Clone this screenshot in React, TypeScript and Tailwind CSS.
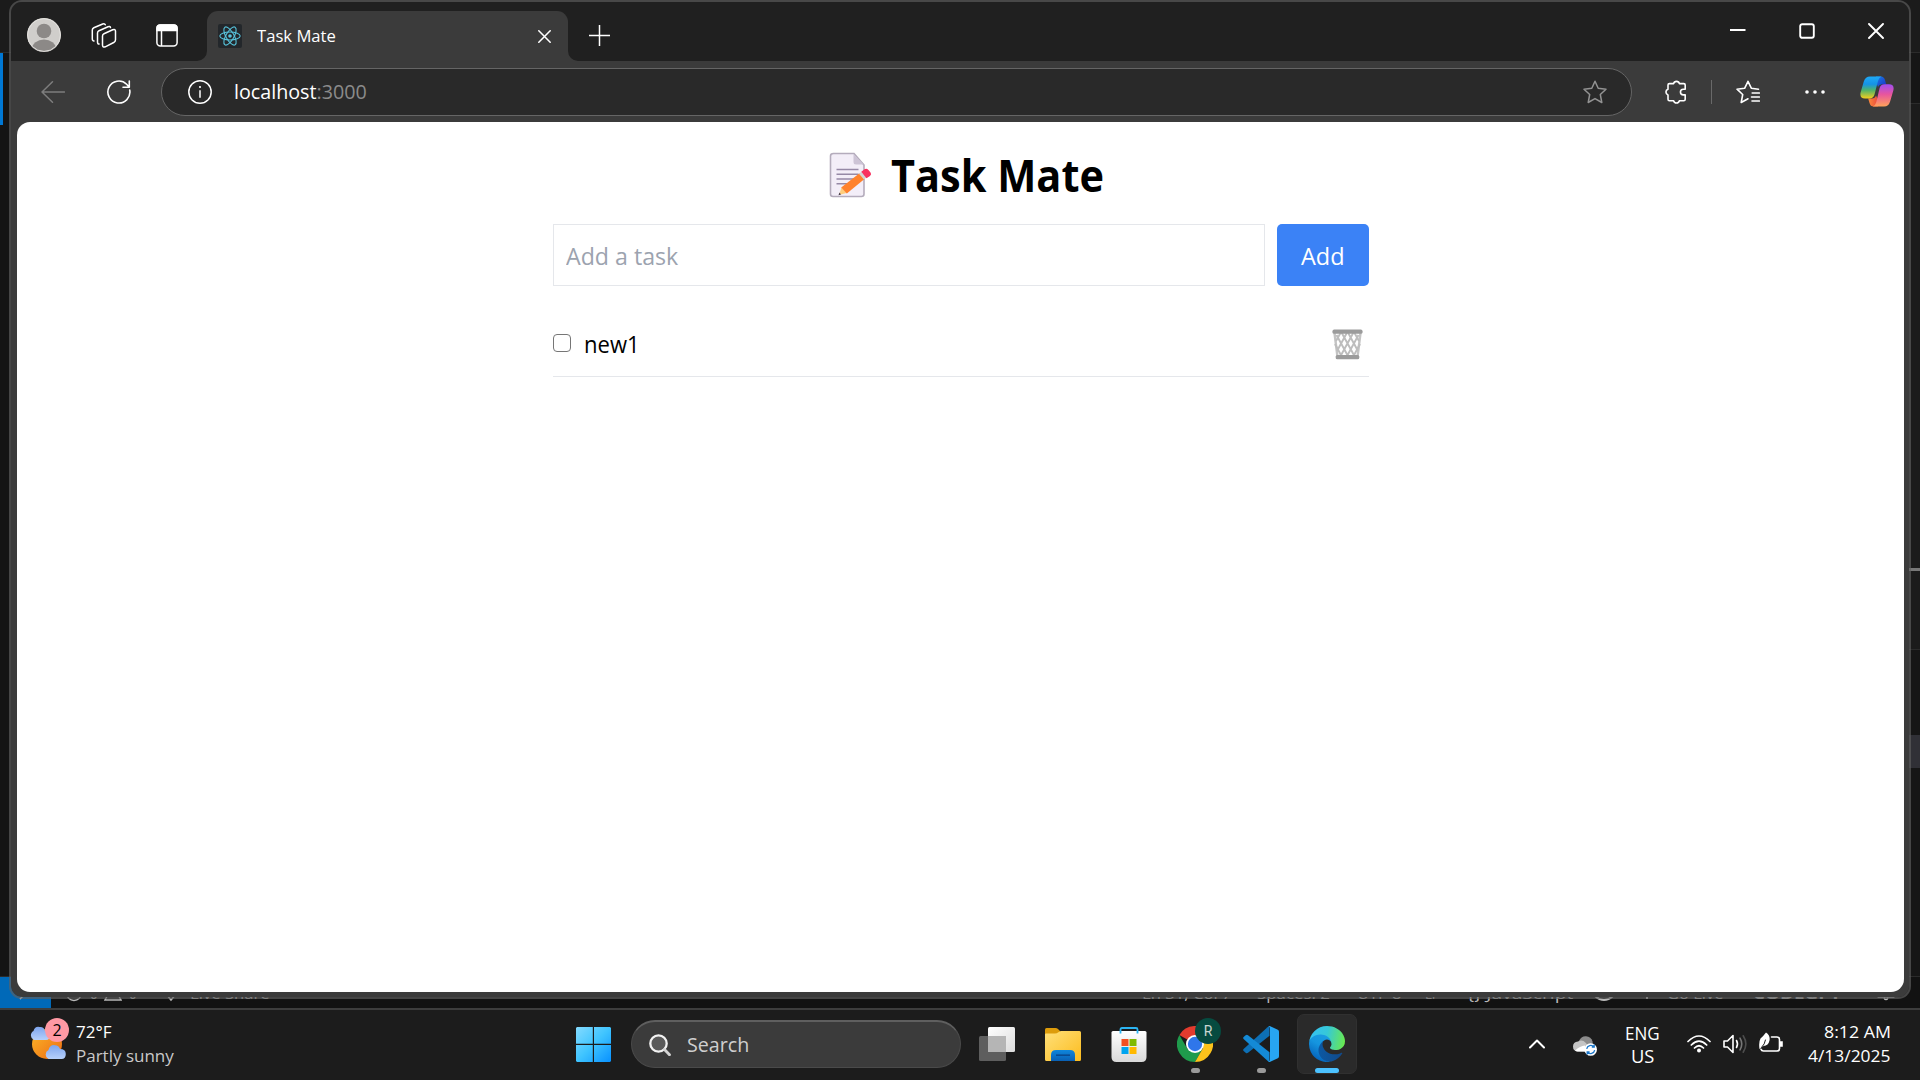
import { useLayoutEffect, useRef, useState, type ReactNode } from "react";

/* Text set to a fixed run width, so labels keep Segoe-like proportions. */
function Label({ width, className = "", children }: { width: number; className?: string; children: ReactNode }) {
  const ref = useRef<HTMLSpanElement>(null);
  const [scale, setScale] = useState(1);
  useLayoutEffect(() => {
    if (ref.current) setScale(width / ref.current.offsetWidth);
  }, [width]);
  return (
    <span className={`block shrink-0 whitespace-nowrap ${className}`} style={{ width }}>
      <span ref={ref} className="inline-block origin-left" style={{ transform: `scaleX(${scale})` }}>
        {children}
      </span>
    </span>
  );
}

function Avatar() {
  return (
    <svg className="size-[34px]" viewBox="0 0 34 34">
      <clipPath id="av"><circle cx="17" cy="17" r="17" /></clipPath>
      <g clipPath="url(#av)">
        <rect width="34" height="34" fill="#d0cecb" />
        <circle cx="17" cy="13" r="7.3" fill="#8c8987" />
        <ellipse cx="17" cy="31" rx="12" ry="9.5" fill="#8c8987" />
      </g>
      <circle cx="17" cy="17" r="16.4" fill="none" stroke="#e2e0dd" strokeWidth="1" />
    </svg>
  );
}

function Workspaces() {
  return (
    <svg className="size-[26px]" viewBox="0 0 26 26" fill="none" stroke="#fff" strokeWidth="1.5" strokeLinejoin="round" strokeLinecap="round">
      <path d="M13 11.700 21.700 7.700Q24.500 6.700 24.500 9.300V17.700Q24.500 19.500 22.700 20.500L14.300 24.800Q11.500 25.800 11.500 23.100V14.100Q11.500 12.500 13 11.700Z" />
      <path d="M8.100 22Q6.500 22.100 6.500 19.700V11Q6.500 9.500 8 8.700L17 4.700Q19.100 4 19.500 5.500" />
      <path d="M3 19Q1.300 19 1.300 16.700V8.100Q1.300 6.500 2.800 5.800L11.700 2Q13.700 1.300 14.300 2.800" />
    </svg>
  );
}

function TabActions() {
  return (
    <svg className="h-[23px] w-[22px]" viewBox="0 0 22 23" fill="none" stroke="#fff" strokeWidth="1.5">
      <rect x="0.9" y="0.9" width="20.200" height="21" rx="3.500" />
      <path d="M1 6V4Q1 1 4 1H18Q21 1 21 4V6.500H1Z" fill="#fff" />
      <path d="M5.500 6V22" />
    </svg>
  );
}

function ReactIcon() {
  return (
    <svg className="size-6 rounded-[2px] bg-[#23272b]" viewBox="0 0 24 24" fill="none" stroke="#58c4dc" strokeWidth="1.100">
      <ellipse cx="12" cy="12" rx="10.200" ry="4" />
      <ellipse cx="12" cy="12" rx="10.200" ry="4" transform="rotate(60 12 12)" />
      <ellipse cx="12" cy="12" rx="10.200" ry="4" transform="rotate(120 12 12)" />
      <circle cx="12" cy="12" r="1.800" fill="#58c4dc" stroke="none" />
    </svg>
  );
}

function Cross({ className, w }: { className: string; w: number }) {
  return (
    <svg className={className} viewBox="0 0 16 16" stroke="#fff" strokeWidth={w} strokeLinecap="round">
      <path d="M1 1 15 15M15 1 1 15" />
    </svg>
  );
}

function Copilot() {
  return (
    <svg className="h-[31px] w-[34px]" viewBox="0 0 34 31">
      <defs>
        <linearGradient id="c1" x1="0" y1="0" x2="0" y2="1">
          <stop offset="0" stopColor="#1fa9f5" /><stop offset=".35" stopColor="#1593e6" /><stop offset=".62" stopColor="#4fb36a" /><stop offset="1" stopColor="#f5cf1c" />
        </linearGradient>
        <linearGradient id="c2" x1="0" y1="0" x2="0" y2="1">
          <stop offset="0" stopColor="#a04df0" /><stop offset=".45" stopColor="#e8559e" /><stop offset="1" stopColor="#ffa35a" />
        </linearGradient>
        <linearGradient id="c3" x1="0" y1="0" x2="1" y2="1">
          <stop offset="0" stopColor="#1a7fe6" /><stop offset="1" stopColor="#1b2fc4" />
        </linearGradient>
        <linearGradient id="c4" x1="0" y1="0" x2="1" y2="0">
          <stop offset="0" stopColor="#f98a3c" /><stop offset="1" stopColor="#ec4a3c" />
        </linearGradient>
      </defs>
      <path d="M16 .5H21Q24 .5 25 4L26.200 8.300H22Q19 8.300 18 11L16 6Z" fill="url(#c3)" />
      <path d="M18 30.500H13.500Q10.500 30.500 9.500 27L8.200 22.500H12Q15 22.500 16 19.500L18 24Z" fill="url(#c4)" />
      <path d="M10 .5H21.500Q18.800 1.500 18 5L14.500 18.500Q13.300 22.500 9.500 22.500H5Q-.6 22.500 .6 16.500L3.800 5.500Q5.400 .5 10 .5Z" fill="url(#c1)" />
      <path d="M24 30.500H12.800Q15.500 29.500 16.300 26L19.500 12.500Q20.600 8.300 24.500 8.300H29Q34.600 8.300 33.400 14.300L30.200 25.300Q28.700 30.500 24 30.500Z" fill="url(#c2)" />
    </svg>
  );
}

function TitleBar() {
  return (
    <div className="flex h-[59px] items-end bg-[#202020]">
      <div className="flex h-[50px] w-[196px] items-center pl-4">
        <div className="flex items-center pb-[2px]">
          <Avatar />
          <div className="ml-[30px]"><Workspaces /></div>
          <div className="ml-[39px]"><TabActions /></div>
        </div>
      </div>
      <div className="relative flex h-[50px] w-[361px] items-center rounded-t-[11px] bg-[#3b3b3b] pb-[1px] pl-[11px]">
        <svg className="absolute bottom-0 -left-[10px] size-[10px]" viewBox="0 0 10 10"><path d="M10 0V10H0A10 10 0 0 0 10 0Z" fill="#3b3b3b" /></svg>
        <svg className="absolute -right-[10px] bottom-0 size-[10px]" viewBox="0 0 10 10"><path d="M0 0V10H10A10 10 0 0 1 0 0Z" fill="#3b3b3b" /></svg>
        <ReactIcon />
        <Label width={79} className="ml-[15px] text-[16px] leading-6 text-white">Task Mate</Label>
        <div className="ml-[202px] pt-[2px]"><Cross className="size-[13px]" w={1.9} /></div>
      </div>
      <svg className="mb-[15px] ml-[21px] size-[21px]" viewBox="0 0 21 21" stroke="#fff" strokeWidth="1.500"><path d="M10.500 0V21M0 10.500H21" /></svg>
      <div className="mb-[22px] ml-auto flex items-center gap-[53px] pr-[25px]">
        <svg className="size-4" viewBox="0 0 16 16"><path d="M0 7H15.500" stroke="#fff" strokeWidth="1.800" /></svg>
        <svg className="size-4" viewBox="0 0 16 16"><rect x="1.200" y="1.200" width="13.600" height="13.600" rx="2" fill="none" stroke="#fff" strokeWidth="1.900" /></svg>
        <Cross className="size-4" w={1.9} />
      </div>
    </div>
  );
}

const starPath = "M12 1.300 15.200 8.300 23 9.200 17.300 14.500 18.800 22.500 12 18.600 5.200 22.500 6.700 14.500 1 9.200 8.800 8.300Z";

function Toolbar() {
  return (
    <div className="flex h-[61px] items-center bg-[#3b3b3b] pl-[30px]">
      <svg className="size-6" viewBox="0 0 24 24" fill="none" stroke="#7d7d7d" strokeWidth="1.500" strokeLinecap="round" strokeLinejoin="round"><path d="M23.500 12H1M11.500 1.800 1 12 11.500 22.200" /></svg>
      <svg className="ml-[42px] size-6" viewBox="0 0 24 24" fill="none" stroke="#fff" strokeWidth="1.600" strokeLinecap="round" strokeLinejoin="round"><path d="M22.700 10A11 11 0 1 1 19.600 4.200L22 6.800M22.300 1V7.200H16" /></svg>
      <div className="ml-[30px] flex h-12 w-[1471px] items-center rounded-full border border-[#656565] bg-[#292929] pl-[26px]">
        <svg className="size-6" viewBox="0 0 24 24" fill="none" stroke="#fff" strokeWidth="1.500"><circle cx="12" cy="12" r="11.200" /><path d="M12 10.300V17.800" /><circle cx="12" cy="7" r="1.100" fill="#fff" stroke="none" /></svg>
        <Label width={133} className="ml-[22px] pt-[1px] text-[20px] leading-7 text-[#8b8b8b]"><span className="text-white">localhost</span>:3000</Label>
        <svg className="mr-6 ml-auto size-6" viewBox="0 0 24 24" fill="none" stroke="#929292" strokeWidth="1.500" strokeLinejoin="round"><path d={starPath} /></svg>
      </div>
      <svg className="ml-[32px] size-6" viewBox="0 0 24 24" fill="none" stroke="#fff" strokeWidth="1.600" strokeLinejoin="round">
        <path d="M9.600 3.600A3 3 0 0 1 15.400 3.600H19.800Q21.200 3.600 21.200 5V9.200H19.300A2.800 2.800 0 0 0 19.300 14.900H21.200V19.300Q21.200 20.700 19.800 20.700H15.400A3 3 0 0 1 9.600 20.700H5.400Q4 20.700 4 19.300V14.900A3 3 0 0 1 4 9.200V5Q4 3.600 5.400 3.600Z" />
      </svg>
      <div className="ml-[23px] h-6 w-px bg-[#696969]" />
      <svg className="ml-[24px] size-6" viewBox="0 0 24 24" fill="none" stroke="#fff" strokeWidth="1.600" strokeLinecap="round" strokeLinejoin="round">
        <path d="M22.500 9.200 15.300 8.200 12 1.300 8.600 8.300 1 9.200 6.700 14.500 5.200 22.500 12 18.800M16.200 13H23.300M15.500 17H23.300M16 21H23.300" />
      </svg>
      <svg className="ml-[45px] h-1 w-5" viewBox="0 0 20 4" fill="#fff"><circle cx="2" cy="2" r="1.800" /><circle cx="10" cy="2" r="1.800" /><circle cx="18" cy="2" r="1.800" /></svg>
      <div className="ml-[35px]"><Copilot /></div>
    </div>
  );
}

function Memo() {
  return (
    <svg className="h-[46px] w-[44px]" viewBox="0 0 44 46">
      <path d="M4.500 1.500H25L35 13V42Q35 44.500 32.500 44.500H4Q1.500 44.500 1.500 42V4Q1.500 1.500 4.500 1.500Z" fill="#f3eef8" stroke="#b4acbc" strokeWidth="1.600" />
      <path d="M24.500 2 34.800 12.500H27Q24.500 12.500 24.500 10Z" fill="#cdc4d6" />
      <path d="M7.500 17.500H29.500M7.500 22.200H29.500M7.500 27H26M7.500 31.800H19" stroke="#9689a6" strokeWidth="1.600" />
      <path d="M12.500 35.500 17.500 41 10 43Z" fill="#ffce7c" />
      <path d="M10.500 40.500 12 42.500 9.500 43.300Z" fill="#433b4b" />
      <path d="M12.200 35.500 30.500 21.300 35.500 27 17.800 41.500Z" fill="#ff822d" />
      <path d="M30 21.700 32.500 19.700 37.500 25.500 35 27.500Z" fill="#d3d3d3" />
      <path d="M32.300 19.800 35.500 17.300Q37.500 16 39.500 18L41.500 20.500Q43 22.300 41 24L37.500 26.300Z" fill="#f8315f" />
    </svg>
  );
}

function Trash() {
  return (
    <svg className="h-[31px] w-[31px]" viewBox="0 0 31 31">
      <path d="M2.500 4 5.500 28M28.500 4 25.500 28" stroke="#c4c4c4" strokeWidth="2.400" />
      <path d="M4 12 8.500 4M5 22 14.800 4M8 28 21.200 4M14.500 28 26.500 6M21 28 28 15M27 12 22.500 4M26 22 16.200 4M23 28 9.800 4M16.500 28 4.500 6M10 28 3 15" stroke="#bdbdbd" strokeWidth="1.900" fill="none" />
      <rect x=".5" y=".6" width="30" height="4.200" rx="1.600" fill="#9b9b9b" />
      <rect x="3.700" y="26" width="23.600" height="4.300" rx="1.600" fill="#9b9b9b" />
    </svg>
  );
}

function TaskPage() {
  return (
    <main className="mr-[5px] ml-[6px] flex flex-1 flex-col items-center rounded-[13px] bg-white text-black">
      <section className="ml-px flex w-[816px] flex-col">
        <h1 className="mt-[23px] flex h-[60px] items-center pl-[276px]">
          <Memo />
          <Label width={213} className="ml-[18px] text-[45px] leading-[60px] font-bold">Task Mate</Label>
        </h1>
        <div className="mt-[19px] flex h-[62px] gap-3">
          <div className="flex flex-1 items-center border border-[#e5e7eb] pt-[2px] pl-3">
            <Label width={112} className="text-[24px] leading-9 text-[#9ca3af]">Add a task</Label>
          </div>
          <button className="flex w-[92px] items-center justify-center rounded-[5px] bg-[#3b82f6] pt-[2px]">
            <Label width={44} className="text-left text-[24px] leading-9 text-white">Add</Label>
          </button>
        </div>
        <div className="mt-6 flex h-[67px] items-center border-b border-[#e5e7eb]">
          <span className="mb-[1px] size-[18px] rounded-[4px] border-[1.500px] border-[#767676]" />
          <Label width={56} className="ml-[13px] pt-[2px] text-[24px] leading-9">new1</Label>
          <span className="mr-[6px] ml-auto pt-[2px]"><Trash /></span>
        </div>
      </section>
    </main>
  );
}

function EditorBehind() {
  return (
    <div className="absolute inset-x-0 top-0 flex h-[1008px] flex-col bg-[#141414]">
      <div className="h-[53px] border-b border-[#2b2b2b] bg-[#1b1b1b]" />
      <div className="flex flex-1 justify-between">
        <div className="h-[72px] w-[3px] bg-[#0078d4]" />
        <div className="flex w-5 flex-col bg-[#161616]">
          <div className="h-[51px] border-b border-[#2b2b2b]" />
          <div className="h-[464px] bg-[#1b1b1b]" />
          <div className="h-[3px] bg-[#777]" />
          <div className="h-[79px] border-b border-[#2b2b2b] bg-[#1b1b1b]" />
          <div className="mt-[85px] h-[33px] bg-[#303036]" />
        </div>
      </div>
      <div className="flex h-[32px] items-center border-t border-[#2b2b2b] bg-[#121212] text-[15px] leading-[20px] text-[#b8b8b8]">
        <div className="flex h-full w-[51px] items-center justify-center bg-[#0069b8]">
          <svg className="size-4" viewBox="0 0 16 16" fill="none" stroke="#ddd" strokeWidth="1.500"><path d="M2 6 6 10 2 14M14 2 10 6 14 10" /></svg>
        </div>
        <svg className="ml-[14px] size-[18px]" viewBox="0 0 18 18" fill="none" stroke="#b8b8b8" strokeWidth="1.400"><circle cx="9" cy="9" r="7.500" /><path d="m6 6 6 6M12 6 6 12" /></svg>
        <Label width={8} className="ml-[7px]">0</Label>
        <svg className="ml-[6px] size-[18px]" viewBox="0 0 18 18" fill="none" stroke="#b8b8b8" strokeWidth="1.400"><path d="M9 2 17 16H1Z" /></svg>
        <Label width={8} className="ml-[7px]">0</Label>
        <svg className="ml-[25px] size-[18px]" viewBox="0 0 18 18" fill="none" stroke="#b8b8b8" strokeWidth="1.500"><path d="M14 3Q12 8 14 10L9 16 5 11Q3 9 4 3" /></svg>
        <Label width={80} className="ml-[10px]">Live Share</Label>
        <Label width={90} className="ml-[872px]">Ln 31, Col 7</Label>
        <Label width={73} className="ml-[25px]">Spaces: 2</Label>
        <Label width={44} className="ml-[27px]">UTF-8</Label>
        <Label width={14} className="ml-[24px]">LF</Label>
        <Label width={106} className="ml-[28px]">{"{}"} JavaScript</Label>
        <svg className="ml-[20px] size-[22px]" viewBox="0 0 22 22" fill="none" stroke="#b8b8b8" strokeWidth="2"><path d="M2 10Q3 3 11 3T20 10V14Q11 22 2 14Z" /></svg>
        <svg className="ml-[24px] size-4" viewBox="0 0 16 16" fill="none" stroke="#b8b8b8" strokeWidth="2"><path d="M8 5V14M3 2Q0 6 3 10M13 2Q16 6 13 10" /></svg>
        <Label width={56} className="ml-[12px]">Go Live</Label>
        <Label width={88} className="ml-[30px] font-bold">CODEGPT</Label>
        <svg className="ml-[36px] size-[18px]" viewBox="0 0 18 18" fill="none" stroke="#b8b8b8" strokeWidth="1.500"><path d="M2 13Q4 11 4 7Q4 2 9 2T14 7Q14 11 16 13ZM7 14Q9 17 11 14" /></svg>
      </div>
    </div>
  );
}

function WeatherIcon() {
  return (
    <svg className="absolute top-[3px] left-0 h-[34px] w-[37px]" viewBox="0 0 37 34">
      <defs>
        <linearGradient id="sun" x1="0" y1="0" x2="1" y2="1"><stop offset="0" stopColor="#fbb829" /><stop offset="1" stopColor="#ee6a12" /></linearGradient>
        <linearGradient id="cl" x1="0" y1="0" x2="0" y2="1"><stop offset="0" stopColor="#7ea5ee" /><stop offset="1" stopColor="#b6d0fb" /></linearGradient>
      </defs>
      <circle cx="18" cy="18" r="15" fill="url(#sun)" />
      <path d="M5 14A5 5 0 0 1 4.500 5Q6 0 10.500 1Q15 .5 16 5Q21 4 21 9T17 14Z" fill="url(#cl)" />
      <path d="M19.500 33A5 5 0 0 1 19.500 24Q21 18.500 26 19.200Q30 19.500 31 23Q36.800 23 36.800 28T32.500 33Z" fill="url(#cl)" />
    </svg>
  );
}

function Start() {
  return (
    <svg className="size-[35px]" viewBox="0 0 35 35">
      <defs><linearGradient id="st" x1="0" y1="0" x2="35" y2="35" gradientUnits="userSpaceOnUse"><stop offset="0" stopColor="#84dbff" /><stop offset=".5" stopColor="#3fc4ff" /><stop offset="1" stopColor="#0891ff" /></linearGradient></defs>
      <path d="M1 0H16.800V16.800H0V1ZM18 0H34L35 1V16.800H18ZM0 18H16.800V35H1L0 34ZM18 18H35V34L34 35H18Z" fill="url(#st)" />
    </svg>
  );
}

function TaskView() {
  return (
    <svg className="size-9" viewBox="0 0 36 36">
      <defs><linearGradient id="tv" x1="0" y1="0" x2="1" y2="1"><stop offset="0" stopColor="#fff" /><stop offset="1" stopColor="#dcdcdc" /></linearGradient></defs>
      <rect x="0" y="10" width="27" height="25" rx="1.500" fill="#5e5e5e" />
      <rect x="9" y="1" width="27" height="25" rx="1.500" fill="url(#tv)" />
      <path d="M9 10H27V26H10.500Q9 26 9 24.500Z" fill="#b5b5b5" />
    </svg>
  );
}

function Explorer() {
  return (
    <svg className="size-9" viewBox="0 0 36 36">
      <defs>
        <linearGradient id="fo" x1="0" y1="0" x2="1" y2="1"><stop offset="0" stopColor="#ffe07a" /><stop offset="1" stopColor="#fcbc1e" /></linearGradient>
        <linearGradient id="fb" x1="0" y1="0" x2="0" y2="1"><stop offset="0" stopColor="#0f86dc" /><stop offset="1" stopColor="#0960b4" /></linearGradient>
      </defs>
      <path d="M0 3.500Q0 2 1.500 2H10.500Q12 2 13 3L16 6V12H0Z" fill="#dd9c0b" />
      <path d="M0 8.500Q0 7.500 1 7.500H10Q12 7.500 13 6.500T16 5H34.500Q36 5 36 6.500V33.500Q36 35 34.500 35H1.500Q0 35 0 33.500Z" fill="url(#fo)" />
      <path d="M6 35V29Q6 24 11 24H25Q30 24 30 29V35Z" fill="url(#fb)" />
      <path d="M11 29.200H25" stroke="#0a4a91" strokeWidth="1.600" />
    </svg>
  );
}

function Store() {
  return (
    <svg className="size-9" viewBox="0 0 36 36">
      <defs><linearGradient id="so" x1="0" y1="0" x2="0" y2="1"><stop offset="0" stopColor="#fff" /><stop offset="1" stopColor="#d9d9d9" /></linearGradient></defs>
      <path d="M.5 6.500Q.5 5 2 5H34Q35.500 5 35.500 6.500V31Q35.500 36 30.500 36H5.500Q.5 36 .5 31Z" fill="url(#so)" />
      <path d="M9.500 7.500V3.500Q9.500 2 11 2H25Q26.500 2 26.500 3.500V7.500" fill="none" stroke="#2bb4f2" strokeWidth="1.800" />
      <path d="M10.500 13H17.500V20H10.500Z" fill="#f25022" /><path d="M18.500 13H25.500V20H18.500Z" fill="#7fba00" />
      <path d="M10.500 21H17.500V28H10.500Z" fill="#00a4ef" /><path d="M18.500 21H25.500V28H18.500Z" fill="#ffb900" />
    </svg>
  );
}

function Chrome() {
  return (
    <svg className="size-9" viewBox="0 0 36 36">
      <path d="M18 18 2.400 9A18 18 0 0 1 33.600 9H18Z" fill="#e33b2e" />
      <path d="M2.400 9A18 18 0 0 0 18 36L25.800 22.500 18 27 10.200 22.500Z" fill="#1f9b4c" />
      <path d="M33.600 9A18 18 0 0 1 18 36L25.800 22.500Q28 15 18 9Z" fill="#fcc31b" />
      <circle cx="18" cy="18" r="9" fill="#fff" /><circle cx="18" cy="18" r="7.200" fill="#2f76ea" />
    </svg>
  );
}

function VSCode() {
  return (
    <svg className="size-9" viewBox="0 0 36 36">
      <path d="M26.500 0V9.800L5 26.800Q3.800 27.700 2.600 26.700L.6 25Q-.4 24 .6 23L24.500 1.200Z" fill="#0d6fb5" />
      <path d="M26.500 36V26.200L5 9.200Q3.800 8.300 2.600 9.300L.6 11Q-.4 12 .6 13L24.500 34.800Z" fill="#148ad6" />
      <path d="M25 .6Q26 -.3 27.300 .3L34.800 3.800Q36 4.400 36 5.800V30.200Q36 31.600 34.800 32.200L27.300 35.700Q26 36.300 25 35.400Q27 36 27 33.500V2.500Q27 0 25 .6Z" fill="#27a5f2" />
    </svg>
  );
}

function Edge() {
  return (
    <svg className="size-9" viewBox="0 0 256 256">
      <defs>
        <linearGradient id="e1" x1="63" y1="178" x2="241" y2="178" gradientUnits="userSpaceOnUse"><stop offset="0" stopColor="#0c59a4" /><stop offset="1" stopColor="#114a8b" /></linearGradient>
        <linearGradient id="e2" x1="140" y1="70" x2="45" y2="225" gradientUnits="userSpaceOnUse"><stop offset="0" stopColor="#1b9de2" /><stop offset=".5" stopColor="#1595df" /><stop offset="1" stopColor="#0668bf" /></linearGradient>
        <linearGradient id="e3" x1="15" y1="70" x2="260" y2="120" gradientUnits="userSpaceOnUse"><stop offset="0" stopColor="#35c1f1" /><stop offset=".45" stopColor="#36c8d8" /><stop offset="1" stopColor="#6aea4c" /></linearGradient>
      </defs>
      <g transform="translate(-4.630 -4.920)">
        <path fill="url(#e1)" d="M235.680 195.460a93.730 93.730 0 0 1-10.540 4.710 101.870 101.870 0 0 1-35.900 6.460c-47.320 0-88.540-32.550-88.540-74.320A31.480 31.480 0 0 1 117.130 105c-42.800 1.800-53.800 46.400-53.800 72.530 0 73.880 68.090 81.370 82.760 81.370 7.910 0 19.840-2.300 27-4.560l1.310-.44a128.340 128.340 0 0 0 66.600-52.800 4 4 0 0 0-5.320-5.640z" />
        <path fill="url(#e2)" d="M110.340 246.340A79.200 79.200 0 0 1 87.600 225a80.720 80.720 0 0 1 29.530-120c3.120-1.470 8.450-4.130 15.540-4a32.350 32.350 0 0 1 25.690 13 31.880 31.880 0 0 1 6.360 18.660c0-.21 24.460-79.600-80-79.600-43.900 0-80 41.660-80 78.210a130.150 130.150 0 0 0 12.110 56 128 128 0 0 0 156.380 67.110 75.550 75.550 0 0 1-62.780-8z" />
        <path fill="url(#e3)" d="M156.940 153.780c-.81 1.050-3.300 2.500-3.300 5.660 0 2.610 1.700 5.120 4.720 7.230 14.380 10 41.490 8.680 41.560 8.680a59.560 59.560 0 0 0 30.270-8.350 61.380 61.380 0 0 0 30.430-52.880c.26-22.410-8-37.310-11.340-43.910C228.090 28.760 182.350 4.920 132.610 4.920a128 128 0 0 0-128 126.200c.48-36.540 36.800-66.050 80-66.050 3.500 0 23.460.34 42 10.070 16.340 8.580 24.900 18.940 30.850 29.210 6.180 10.670 7.280 24.150 7.280 29.520s-2.740 13.330-7.800 19.910z" />
      </g>
    </svg>
  );
}

function AppCell({ children, indicator }: { children: ReactNode; indicator?: "idle" | "active" }) {
  return (
    <div className="flex w-[66px] justify-center">
      <div className={`relative flex h-[60px] w-[60px] items-center justify-center rounded-[7px] ${indicator === "active" ? "border border-[#303030] bg-[#2a2a2a]" : ""}`}>
        {children}
        {indicator === "idle" && <span className="absolute bottom-[1px] h-[5px] w-[9px] rounded-full bg-[#9a9a9a]" />}
        {indicator === "active" && <span className="absolute bottom-0 h-[5px] w-6 rounded-full bg-[#4cc2ff]" />}
      </div>
    </div>
  );
}

function Taskbar() {
  return (
    <footer className="absolute inset-x-0 bottom-0 flex h-[72px] items-center border-t-2 border-[#3d3d3d] bg-[#1c1c1c] pb-[2px] text-white">
      <div className="flex w-[560px] items-center pl-[29px]">
        <div className="relative h-[42px] w-[41px]">
          <WeatherIcon />
          <span className="absolute -top-[5px] left-[16px] flex size-6 items-center justify-center rounded-full bg-[#ff99a4] text-[16px] leading-6 text-black">2</span>
        </div>
        <div className="ml-[6px] text-[17px] leading-6">
          <Label width={36}>72°F</Label>
          <Label width={98} className="text-[#c9c9c9]">Partly sunny</Label>
        </div>
      </div>
      <div className="flex w-[67px] justify-center"><Start /></div>
      <div className="mr-[3px] ml-1 flex h-12 w-[330px] items-center rounded-full border border-t-2 border-[#4a4a4a] border-t-[#5f5f5f] bg-[#3b3b3b] pl-[17px]">
        <svg className="size-[22px]" viewBox="0 0 22 22" fill="none"><circle cx="9.500" cy="9.500" r="8.200" fill="#5a5a5a" stroke="#f2f2f2" strokeWidth="2.300" /><path d="M15.500 15.500 20.500 20.800" stroke="#d5d5d5" strokeWidth="2.800" strokeLinecap="round" /></svg>
        <Label width={62} className="ml-[16px] text-[20px] leading-7 text-[#cfcfcf]">Search</Label>
      </div>
      <AppCell><TaskView /></AppCell>
      <AppCell><Explorer /></AppCell>
      <AppCell><Store /></AppCell>
      <AppCell indicator="idle">
        <Chrome />
        <span className="absolute top-[4px] left-[30px] flex size-[26px] items-center justify-center rounded-full bg-[#064b40] font-['Roboto'] text-[14px] text-[#c9d6d2]">R</span>
      </AppCell>
      <AppCell indicator="idle"><VSCode /></AppCell>
      <AppCell indicator="active"><Edge /></AppCell>
      <div className="ml-[153px] flex flex-1 items-center">
        <div className="flex w-12 justify-center"><svg className="h-[10px] w-4" viewBox="0 0 16 10" fill="none" stroke="#fff" strokeWidth="2" strokeLinecap="round" strokeLinejoin="round"><path d="M1 8.500 8 1.500 15 8.500" /></svg></div>
        <div className="flex w-12 justify-center pt-[3px]">
          <svg className="h-[22px] w-6" viewBox="0 0 24 22">
            <path d="M6 6Q8 1 13 1.200 18 1.500 19.500 6.500L20 12H10Z" fill="#8c8c8c" />
            <path d="M4.500 16.500Q0 16 0 11.500T5 6.500Q9 4 13 8L18 16.500Z" fill="#c4c4c4" />
            <path d="M2 15.500Q7 11 12 10.500V16.500H4.500Q3 16.500 2 15.500Z" fill="#fff" />
            <circle cx="17.700" cy="14.500" r="6.300" fill="#fff" />
            <path d="M13.700 13.800A4.200 4.200 0 0 1 21 11.800M21.700 15.200A4.200 4.200 0 0 1 14.400 17.200M21.200 9.500V12H18.800M14.200 19.500V17H16.600" fill="none" stroke="#1a76c9" strokeWidth="1.300" />
          </svg>
        </div>
        <div className="flex w-[66px] flex-col items-center pt-[1px] text-[17.500px] leading-[23px]">
          <Label width={35}>ENG</Label>
          <Label width={23}>US</Label>
        </div>
        <div className="ml-[6px] flex w-9 justify-center">
          <svg className="h-[18px] w-6" viewBox="0 0 24 18" fill="none" stroke="#fff" strokeWidth="1.700" strokeLinecap="round"><path d="M1 6.500Q12-4.500 23 6.500M4.300 10Q12 2.200 19.700 10M7.500 13Q12 8.500 16.500 13" /><circle cx="12" cy="15.600" r="2" fill="#fff" stroke="none" /></svg>
        </div>
        <div className="flex w-9 justify-center">
          <svg className="h-5 w-6" viewBox="0 0 24 20" fill="none" stroke="#fff" strokeWidth="1.600" strokeLinecap="round" strokeLinejoin="round"><path d="M1 7H4.500L10 1.500V18.500L4.500 13H1Z" /><path d="M13.500 6.500Q15.500 10 13.500 13.500" /><path d="M17 4.200Q20.500 10 17 15.800" stroke="#777" /><path d="M20.200 1.800Q25.500 10 20.200 18.200" stroke="#4d4d4d" /></svg>
        </div>
        <div className="flex w-9 justify-center pb-[4px]">
          <svg className="h-[21px] w-6" viewBox="0 0 24 21" fill="none" stroke="#fff" strokeWidth="1.600" strokeLinecap="round"><path d="M12.500 5H18Q20.500 5 20.500 7.500V16.500Q20.500 19 18 19H4.500Q2.500 19 2 17.300" /><path d="M21 10H23V14H21Z" fill="#fff" /><path d="M7 .5Q11.500 3.500 10.500 8.500 9.500 13.500 4.500 14L.5 17Q-.5 10 1.500 6.500 4 4.500 7 .5Z" fill="#fff" stroke="none" /><path d="M2.500 15.500Q6 12 6.500 8" stroke="#1c1c1c" strokeWidth="1" /></svg>
        </div>
        <div className="ml-auto flex flex-col items-end pr-[29px] text-[17px] leading-6">
          <Label width={67}>8:12 AM</Label>
          <Label width={83}>4/13/2025</Label>
        </div>
      </div>
    </footer>
  );
}

export default function App() {
  return (
    <div className="relative h-[1080px] w-[1920px] overflow-hidden bg-[#141414] font-['Open_Sans','Noto_Sans',sans-serif]">
      <EditorBehind />
      <div className="absolute top-0 left-[9px] flex h-[999px] w-[1902px] flex-col overflow-hidden rounded-[13px] border-2 border-[#616161a6] bg-[#3b3b3b] bg-clip-padding pb-[5px]">
        <TitleBar />
        <Toolbar />
        <TaskPage />
      </div>
      <Taskbar />
    </div>
  );
}
